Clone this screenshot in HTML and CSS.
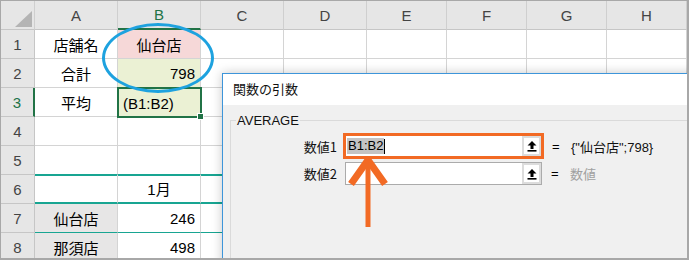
FILE: index.html
```html
<!DOCTYPE html>
<html lang="ja">
<head>
  <meta charset="UTF-8">
  <title>関数の引数</title>
  <link rel="stylesheet" href="styles.css">
</head>
<body>
  <div class="sheet">
    <!-- column headers -->
    <div class="r hd">
      <div class="h corner"><span class="tri"></span></div>
      <div class="h">A</div>
      <div class="h sel-col">B</div>
      <div class="h">C</div>
      <div class="h">D</div>
      <div class="h">E</div>
      <div class="h">F</div>
      <div class="h">G</div>
      <div class="h">H</div>
    </div>

    <div class="r">
      <div class="h">1</div>
      <div class="c mid">店舗名</div>
      <div class="c mid pink">仙台店</div>
      <div class="c"></div><div class="c"></div><div class="c"></div><div class="c"></div><div class="c"></div><div class="c"></div>
    </div>
    <div class="r">
      <div class="h">2</div>
      <div class="c mid">合計</div>
      <div class="c num lime">798</div>
      <div class="c"></div><div class="c"></div><div class="c"></div><div class="c"></div><div class="c"></div><div class="c"></div>
    </div>
    <div class="r">
      <div class="h sel-row">3</div>
      <div class="c mid">平均</div>
      <div class="c lime active">(B1:B2)</div>
      <div class="c"></div><div class="c"></div><div class="c"></div><div class="c"></div><div class="c"></div><div class="c"></div>
    </div>
    <div class="r">
      <div class="h">4</div>
      <div class="c"></div><div class="c"></div><div class="c"></div><div class="c"></div><div class="c"></div><div class="c"></div><div class="c"></div><div class="c"></div>
    </div>
    <div class="r teal-below">
      <div class="h">5</div>
      <div class="c"></div><div class="c"></div><div class="c"></div><div class="c"></div><div class="c"></div><div class="c"></div><div class="c"></div><div class="c"></div>
    </div>
    <div class="r teal-thick">
      <div class="h">6</div>
      <div class="c"></div>
      <div class="c mid">1月</div>
      <div class="c"></div><div class="c"></div><div class="c"></div><div class="c"></div><div class="c"></div><div class="c"></div>
    </div>
    <div class="r teal-thin">
      <div class="h">7</div>
      <div class="c mid gray">仙台店</div>
      <div class="c num">246</div>
      <div class="c"></div><div class="c"></div><div class="c"></div><div class="c"></div><div class="c"></div><div class="c"></div>
    </div>
    <div class="r">
      <div class="h">8</div>
      <div class="c mid gray">那須店</div>
      <div class="c num">498</div>
      <div class="c"></div><div class="c"></div><div class="c"></div><div class="c"></div><div class="c"></div><div class="c"></div>
    </div>

    <!-- callout ring around B1:B2 -->
    <div class="ring"></div>

    <!-- Function Arguments dialog -->
    <div class="dialog">
      <div class="dlg-title">関数の引数</div>
      <div class="dlg-body">
        <fieldset class="args">
          <legend>AVERAGE</legend>
          <div class="arg">
            <label>数値1</label>
            <div class="ref hl">
              <span class="val"><span class="picked">B1:B2</span><span class="caret"></span></span>
              <span class="ref-btn">
                <svg width="12" height="12" viewBox="0 0 12 12"><path d="M6 1 L10.5 5.5 H7.5 V9 H4.5 V5.5 H1.5 Z" fill="#000"/><rect x="1.5" y="10" width="9" height="1.6" fill="#000"/></svg>
              </span>
            </div>
            <span class="eq">=</span>
            <span class="res">{"仙台店";798}</span>
          </div>
          <div class="arg">
            <label>数値2</label>
            <div class="ref">
              <span class="val"></span>
              <span class="ref-btn">
                <svg width="12" height="12" viewBox="0 0 12 12"><path d="M6 1 L10.5 5.5 H7.5 V9 H4.5 V5.5 H1.5 Z" fill="#000"/><rect x="1.5" y="10" width="9" height="1.6" fill="#000"/></svg>
              </span>
            </div>
            <span class="eq">=</span>
            <span class="res hint">数値</span>
          </div>
        </fieldset>
      </div>
    </div>

    <!-- pointer arrow -->
    <svg class="pointer" width="44" height="74" viewBox="0 0 44 74">
      <polyline points="5,28 22,4 39,28" fill="none" stroke="#f26a24" stroke-width="7"/>
      <line x1="22" y1="5" x2="22" y2="71" stroke="#f26a24" stroke-width="5"/>
    </svg>
  </div>
</body>
</html>
```

FILE: styles.css
```css
* {
  margin: 0;
  padding: 0;
  box-sizing: border-box;
}

body {
  background: #fff;
  font-family: "Liberation Sans", "Noto Sans CJK JP", sans-serif;
  color: #000;
}

.sheet {
  position: relative;
  width: 689px;
  height: 260px;
  overflow: hidden;
  border-top: 1px solid #a8a8a8;
  border-left: 1px solid #a8a8a8;
  font-size: 15px;
}

/* frame drawn above the dialog */
.sheet::after {
  content: "";
  position: absolute;
  top: 0;
  left: 0;
  right: 0;
  bottom: 0;
  border-right: 2px solid #a8a8a8;
  border-bottom: 2px solid #a8a8a8;
  pointer-events: none;
  z-index: 5;
}

.r {
  display: grid;
  grid-template-columns: 34px 83px 83px 83px 83px 80px 80px 80px 80px;
  height: 29px;
}

.h {
  background: #e6e6e6;
  color: #444;
  border-right: 1px solid #c6c6c6;
  border-bottom: 1px solid #c6c6c6;
  display: flex;
  align-items: center;
  justify-content: center;
}

.hd .h {
  border-right-color: #cfcfcf;
}

.corner {
  align-items: flex-end;
  justify-content: flex-end;
  padding: 0 2px 2px 0;
}

.tri {
  width: 0;
  height: 0;
  border-left: 17px solid transparent;
  border-bottom: 16px solid #b4b4b4;
}

.sel-col {
  color: #217346;
  border-bottom: 2px solid #217346;
}

.sel-row {
  color: #217346;
  border-right: 2px solid #217346;
}

.c {
  border-right: 1px solid #d4d4d4;
  border-bottom: 1px solid #d4d4d4;
  display: flex;
  align-items: center;
  padding: 0 5px;
  white-space: nowrap;
}

.mid {
  justify-content: center;
}

.num {
  justify-content: flex-end;
}

.pink {
  background: #f6d8d8;
}

.lime {
  background: #ebf1d4;
}

.gray {
  background: #e7e6e6;
}

.active {
  position: relative;
  outline: 2px solid #217346;
  outline-offset: -1px;
  padding-top: 3px;
}

.active::after {
  content: "";
  position: absolute;
  right: -4px;
  bottom: -4px;
  width: 5px;
  height: 5px;
  background: #217346;
  border: 1px solid #fff;
}

.teal-below .c {
  border-bottom-color: #18a592;
}

.teal-thick .c {
  border-bottom: 2px solid #18a592;
  box-shadow: inset 0 1px 0 #18a592;
}

.teal-thin .c {
  border-bottom-color: #18a592;
}

.ring {
  position: absolute;
  left: 101px;
  top: 22px;
  width: 112px;
  height: 70px;
  border: 3px solid #1ea2df;
  border-radius: 50%;
  z-index: 2;
}

/* dialog */
.dialog {
  position: absolute;
  left: 221px;
  top: 72px;
  width: 520px;
  height: 320px;
  background: #f0f0f0;
  border: 1px solid #3d95da;
  box-shadow: 0 0 10px rgba(0, 0, 0, 0.22);
  z-index: 3;
  font-size: 13px;
}

.dlg-title {
  height: 31px;
  background: #fff;
  padding: 5px 0 0 10px;
  font-family: "Noto Sans CJK JP", sans-serif;
  font-size: 13px;
  color: #111;
}

.dlg-body {
  padding: 8px 0 0 7px;
}

.args {
  border: 1px solid #dadada;
  padding: 5px 0 20px 0;
  min-height: 260px;
}

.args legend {
  margin-left: 5px;
  padding: 0 1px;
  font-size: 13px;
  color: #111;
}

.arg {
  display: flex;
  align-items: center;
  margin-bottom: 3px;
}

.arg label {
  width: 106px;
  text-align: right;
  font-family: "Noto Sans CJK JP", sans-serif;
  font-size: 13px;
  color: #111;
}

.ref {
  margin-left: 8px;
  width: 197px;
  height: 23px;
  background: #fff;
  border: 1px solid #ababab;
  display: flex;
  align-items: center;
  justify-content: space-between;
}

.ref.hl {
  margin-left: 6px;
  width: 201px;
  height: 26px;
  border: 3px solid #f26a24;
}

.val {
  display: flex;
  align-items: center;
  padding-left: 1px;
  font-size: 13px;
}

.picked {
  background: #c4c4c4;
  padding: 0 1px;
  line-height: 16px;
}

.caret {
  width: 1px;
  height: 15px;
  background: #000;
}

.ref-btn {
  width: 19px;
  height: 100%;
  background: #fff;
  border: 2px solid #dcdcdc;
  display: flex;
  align-items: center;
  justify-content: center;
}

.ref .ref-btn {
  height: 21px;
}

.ref.hl .ref-btn {
  height: 20px;
}

.eq {
  margin-left: 9px;
  width: 19px;
}

.ref.hl + .eq {
  margin-left: 8px;
}

.res {
  font-family: "Liberation Sans", "Noto Sans CJK JP", sans-serif;
  font-size: 13px;
  color: #111;
}

.hint {
  color: #a0a0a0;
}

.pointer {
  position: absolute;
  left: 345px;
  top: 155px;
  z-index: 4;
}
```
